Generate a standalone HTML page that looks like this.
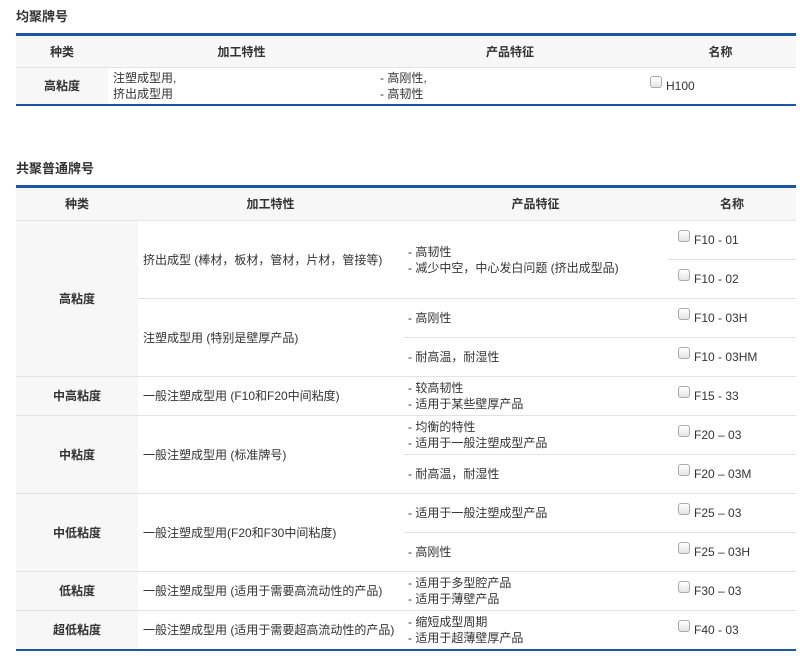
<!DOCTYPE html>
<html><head><meta charset="utf-8"><style>
*{margin:0;padding:0;box-sizing:border-box}
body{width:800px;height:672px;background:#fff;font-family:"Liberation Sans","Noto Sans CJK SC",sans-serif;font-size:12px;color:#333;position:relative;overflow:hidden}
h3{position:absolute;left:16px;font-size:13px;font-weight:bold;color:#333}
table{position:absolute;left:16px;width:780px;border-collapse:collapse;table-layout:fixed;border-top:3px solid #1a56a4;border-bottom:2px solid #1a56a4}
td,th{border-top:1px solid #e3e3e3;vertical-align:middle;line-height:16px;padding:0 5px;font-weight:normal;text-align:left}
th{background:#f7f7f7;font-weight:bold;text-align:center;height:34px;border-top:none}
td.c{background:#f7f7f7;font-weight:bold;text-align:center}
.cb{display:inline-block;width:12px;height:12px;border:1px solid #aaa;border-radius:3px;background:linear-gradient(#fff,#e4e4e4);vertical-align:top;margin:0 4px 0 5px;position:relative;top:-2px}
</style></head><body>
<h3 style="top:6px">均聚牌号</h3>
<table style="top:33px">
<colgroup><col style="width:92px"><col style="width:267px"><col style="width:270px"><col></colgroup>
<tr><th style="height:33px">种类</th><th style="height:33px">加工特性</th><th style="height:33px">产品特征</th><th style="height:33px">名称</th></tr>
<tr style="height:37px"><td class="c">高粘度</td><td style="padding-left:5px">注塑成型用,<br>挤出成型用</td><td style="padding-left:5px">- 高刚性,<br>- 高韧性</td><td style="padding-left:0"><span class="cb"></span>H100</td></tr>
</table>
<h3 style="top:158px">共聚普通牌号</h3>
<table style="top:185px">
<colgroup><col style="width:122px"><col style="width:265px"><col style="width:265px"><col></colgroup>
<tr><th>种类</th><th>加工特性</th><th>产品特征</th><th>名称</th></tr>
<tr style="height:39px"><td class="c" rowspan="4">高粘度</td><td rowspan="2">挤出成型 (棒材，板材，管材，片材，管接等)</td><td rowspan="2">- 高韧性<br>- 减少中空，中心发白问题 (挤出成型品)</td><td><span class="cb"></span>F10 - 01</td></tr>
<tr style="height:39px"><td><span class="cb"></span>F10 - 02</td></tr>
<tr style="height:39px"><td rowspan="2">注塑成型用 (特别是壁厚产品)</td><td>- 高刚性</td><td><span class="cb"></span>F10 - 03H</td></tr>
<tr style="height:39px"><td>- 耐高温，耐湿性</td><td><span class="cb"></span>F10 - 03HM</td></tr>
<tr style="height:39px"><td class="c">中高粘度</td><td>一般注塑成型用 (F10和F20中间粘度)</td><td>- 较高韧性<br>- 适用于某些壁厚产品</td><td><span class="cb"></span>F15 - 33</td></tr>
<tr style="height:39px"><td class="c" rowspan="2">中粘度</td><td rowspan="2">一般注塑成型用 (标准牌号)</td><td>- 均衡的特性<br>- 适用于一般注塑成型产品</td><td><span class="cb"></span>F20 – 03</td></tr>
<tr style="height:39px"><td>- 耐高温，耐湿性</td><td><span class="cb"></span>F20 – 03M</td></tr>
<tr style="height:39px"><td class="c" rowspan="2">中低粘度</td><td rowspan="2">一般注塑成型用(F20和F30中间粘度)</td><td>- 适用于一般注塑成型产品</td><td><span class="cb"></span>F25 – 03</td></tr>
<tr style="height:39px"><td>- 高刚性</td><td><span class="cb"></span>F25 – 03H</td></tr>
<tr style="height:39px"><td class="c">低粘度</td><td>一般注塑成型用 (适用于需要高流动性的产品)</td><td>- 适用于多型腔产品<br>- 适用于薄壁产品</td><td><span class="cb"></span>F30 – 03</td></tr>
<tr style="height:39px"><td class="c">超低粘度</td><td>一般注塑成型用 (适用于需要超高流动性的产品)</td><td>- 缩短成型周期<br>- 适用于超薄壁厚产品</td><td><span class="cb"></span>F40 - 03</td></tr>
</table>
</body></html>
